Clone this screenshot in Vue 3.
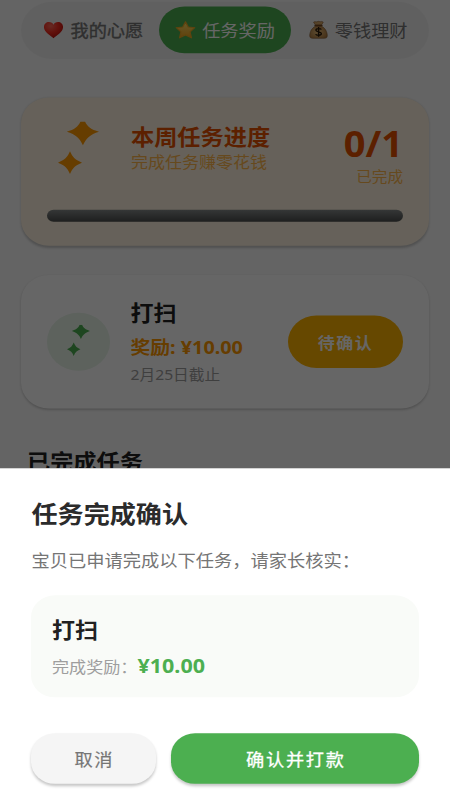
<script setup>
const tabs = [
  { label: '我的心愿', icon: 'heart', state: 'strong' },
  { label: '任务奖励', icon: 'star', state: 'active' },
  { label: '零钱理财', icon: 'bag', state: 'plain' },
]
const task = { name: '打扫', reward: '¥10.00', due: '2月25日截止' }
</script>

<template>
  <div class="viewport">
    <div class="stage">
      <main class="page">
        <nav class="tabs">
          <div v-for="t in tabs" :key="t.label" class="tab" :class="t.state">
            <svg v-if="t.icon === 'heart'" class="emoji" viewBox="0 0 22 22">
              <defs>
                <radialGradient id="heartFill" cx=".35" cy=".25" r=".8">
                  <stop offset="0" stop-color="#ff6a5a" />
                  <stop offset=".5" stop-color="#f52c20" />
                  <stop offset="1" stop-color="#b80f0c" />
                </radialGradient>
              </defs>
              <path fill="url(#heartFill)" d="M11 20.5C8.500 17.500 1 14 1 7.700C1 4.300 3.400 2 6.200 2C8.500 2 10.200 3.200 11 5C11.800 3.200 13.500 2 15.800 2C18.600 2 21 4.300 21 7.700C21 14 13.500 17.500 11 20.500Z" />
            </svg>
            <svg v-else-if="t.icon === 'star'" class="emoji" viewBox="0 0 22 22">
              <defs>
                <linearGradient id="starFill" x1="0" y1="0" x2="0" y2="1">
                  <stop offset="0" stop-color="#ffe36a" />
                  <stop offset="1" stop-color="#f0a21c" />
                </linearGradient>
              </defs>
              <path fill="url(#starFill)" stroke="#eda823" stroke-width="1.300" stroke-linejoin="round" d="M11 1.700L13.900 7.700L20.700 8.500L15.800 13.200L17.200 20L11 16.800L4.800 20L6.200 13.200L1.300 8.500L8.100 7.700Z" />
            </svg>
            <svg v-else class="emoji" viewBox="0 0 22 22">
              <defs>
                <radialGradient id="bagFill" cx=".45" cy=".5" r=".65">
                  <stop offset="0" stop-color="#e8bd78" />
                  <stop offset="1" stop-color="#a8743a" />
                </radialGradient>
              </defs>
              <path fill="url(#bagFill)" stroke="#7c5228" stroke-width=".6" d="M8 6.500C3.800 9 1.800 13.500 1.800 17.500C1.800 20 3 20.600 5 20.600H17C19 20.600 20.200 20 20.200 17.500C20.200 13.500 18.200 9 14 6.500Z" />
              <path fill="#d5a666" stroke="#7c5228" stroke-width=".6" d="M7.800 5.500L5.800 2.200C7.500 .8 8.800 2.500 10 1.500C11.500 .5 12.500 2.300 14.500 1.300L16 2.200L14.200 5.500Z" />
              <path stroke="#70451e" stroke-width="1.600" stroke-linecap="round" d="M7.500 6H14.500" />
              <path fill="none" stroke="#2a1a0a" stroke-width="1.500" d="M14 10.500C13.300 9.300 8.300 8.800 8.300 11.300C8.300 13.700 14 12.700 14 15.200C14 17.800 8.800 17.500 8 15.900M11.100 7.600V18.800" />
            </svg>
            <span>{{ t.label }}</span>
          </div>
        </nav>

        <section class="card progress">
          <div class="progress-row">
            <div class="icon-slot">
              <svg class="spark large" viewBox="0 0 42 57" preserveAspectRatio="none">
                <path d="M22.500 0H27C29.500 6 33 8.500 41 11.200C32 14.300 28 18.500 24.900 26C22 18.500 17.800 14.300 8.800 11.200C16.600 8.500 20 6 22.500 0Z" />
                <path d="M12 32.500C14.500 39 17.500 42 24 44.800C17.500 47.500 14.500 50.500 12 57C9.500 50.500 6.500 47.500 0 44.800C6.500 42 9.500 39 12 32.500Z" />
              </svg>
            </div>
            <div class="progress-text">
              <h2>本周任务进度</h2>
              <p>完成任务赚零花钱</p>
            </div>
            <div class="score">
              <strong>0/1</strong>
              <span>已完成</span>
            </div>
          </div>
          <div class="bar"></div>
        </section>

        <section class="card task">
          <div class="badge">
            <svg class="spark small" viewBox="0 0 42 57" preserveAspectRatio="none">
              <path d="M22.500 0H27C29.500 6 33 8.500 41 11.200C32 14.300 28 18.500 24.900 26C22 18.500 17.800 14.300 8.800 11.200C16.600 8.500 20 6 22.500 0Z" />
              <path d="M12 32.500C14.500 39 17.500 42 24 44.800C17.500 47.500 14.500 50.500 12 57C9.500 50.500 6.500 47.500 0 44.800C6.500 42 9.500 39 12 32.500Z" />
            </svg>
          </div>
          <div class="task-text">
            <h3>{{ task.name }}</h3>
            <p class="reward">奖励: {{ task.reward }}</p>
            <p class="due">{{ task.due }}</p>
          </div>
          <button class="pending">待确认</button>
        </section>

        <h2 class="section-title">已完成任务</h2>
      </main>

      <div class="scrim"></div>

      <section class="sheet">
        <h1>任务完成确认</h1>
        <p class="hint">宝贝已申请完成以下任务，请家长核实：</p>
        <div class="summary">
          <h3>{{ task.name }}</h3>
          <p><span>完成奖励：</span><b>{{ task.reward }}</b></p>
        </div>
        <div class="actions">
          <button class="cancel">取消</button>
          <button class="confirm">确认并打款</button>
        </div>
      </section>
    </div>
  </div>
</template>

<style>
html, body { margin: 0; overflow: hidden; background: #fff; }
</style>

<style scoped>
* { box-sizing: border-box; }
h1, h2, h3, p { margin: 0; }
button { border: 0; padding: 0; font-family: inherit; }
.viewport { width: 450px; height: 800px; overflow: hidden; }
.stage {
  position: relative;
  width: 450px;
  height: 869.565px;
  transform: scaleY(.92);
  transform-origin: 0 0;
  font-family: "Noto Sans", "Noto Sans CJK SC", sans-serif;
  white-space: nowrap;
}
.page { height: 509px; padding: 1.500px 21px 0; background: #fafafa; overflow: hidden; }
.tabs {
  display: flex;
  align-items: center;
  height: 62.300px;
  padding: 0 5px;
  border-radius: 31px;
  background: #f1f1f1;
}
.tab {
  display: flex;
  align-items: center;
  justify-content: center;
  gap: 6px;
  width: 133px;
  height: 51px;
  border-radius: 25.500px;
  font-size: 18.200px;
  line-height: 28px;
  color: #757575;
}
.tab.strong { padding-left: 2px; -webkit-text-stroke: .4px #757575; }
.tab.active { background: #4caf50; color: #fff; }
.emoji { width: 21px; height: 21px; flex: none; }

.card {
  border-radius: 28px;
  background: #fff;
  box-shadow: 0 1.500px 2.500px rgba(0, 0, 0, .2);
}
.progress { height: 161.500px; margin-top: 42px; padding: 26px; background: #fff3e0; }
.progress-row { display: flex; height: 96.700px; }
.icon-slot { width: 84px; padding-left: 11.300px; }
.spark { display: block; }
.large { width: 42px; height: 57px; fill: #ff9800; }
.small { width: 23.500px; height: 34px; fill: #4caf50; }
.progress-text { flex: 1; padding-top: 1px; }
.progress-text h2 { font-size: 23.200px; line-height: 32px; color: #e65100; }
.progress-text p { font-size: 17px; line-height: 24px; color: #ffb74d; }
.score { display: flex; flex-direction: column; align-items: flex-end; padding-top: 2px; }
.score strong { font-size: 38px; line-height: 44px; color: #e65100; }
.score span { margin-top: 2px; font-size: 15.600px; line-height: 24px; color: #ffb74d; }
.bar { height: 13px; border-radius: 6.500px; background: linear-gradient(#858a8a, #4a4d4d); }

.task { display: flex; align-items: center; height: 145.500px; margin-top: 31.400px; padding: 0 26px; }
.badge {
  display: flex;
  width: 62.500px;
  height: 62.500px;
  padding: 12.500px 0 0 20px;
  border-radius: 50%;
  background: #e8f5e9;
}
.task-text { flex: 1; padding-left: 21px; }
.task-text h3 { font-size: 23px; line-height: 38px; color: #212121; }
.reward { padding-top: 2px; font-size: 19.800px; line-height: 33px; font-weight: 700; color: #ff9800; }
.due { font-size: 15.700px; line-height: 27px; color: #9e9e9e; }
.pending {
  width: 115px;
  height: 57.300px;
  border-radius: 28.600px;
  background: #ffb300;
  color: #fff;
  font-size: 17px;
  font-weight: 700;
  letter-spacing: 1.500px;
}
.section-title { margin: 42px 0 0 6px; font-size: 23.200px; line-height: 32px; color: #212121; }
.scrim { position: absolute; inset: 0; background: rgba(0, 0, 0, .6); }

.sheet {
  position: absolute;
  left: 0;
  right: 0;
  top: 508.700px;
  bottom: 0;
  padding: 33px 31px 0;
  background: #fff;
}
.sheet h1 { padding-left: .5px; font-size: 26.100px; line-height: 34px; color: #2b2b2b; }
.hint { margin-top: 19px; padding-left: .5px; font-size: 18.250px; line-height: 28px; color: #757575; }
.summary { height: 111.300px; margin-top: 24px; padding: 21px; border-radius: 24px; background: #f9fbf8; }
.summary h3 { font-size: 23px; line-height: 34px; color: #212121; }
.summary p { display: flex; align-items: center; margin-top: 6px; height: 32px; }
.summary span { font-size: 17.100px; color: #9e9e9e; }
.summary b { font-size: 21.500px; color: #4caf50; }
.actions { display: flex; gap: 15px; margin-top: 39px; }
.actions button {
  height: 55.500px;
  border-radius: 24px;
  font-size: 18.200px;
  letter-spacing: 1.700px;
  text-indent: 1.700px;
  box-shadow: 0 2.500px 3px rgba(0, 0, 0, .22);
}
.actions .cancel { width: 125px; background: #f5f5f5; color: #757575; -webkit-text-stroke: .2px #757575; }
.actions .confirm { width: 248px; background: #4caf50; color: #fff; -webkit-text-stroke: .3px #fff; }
</style>
